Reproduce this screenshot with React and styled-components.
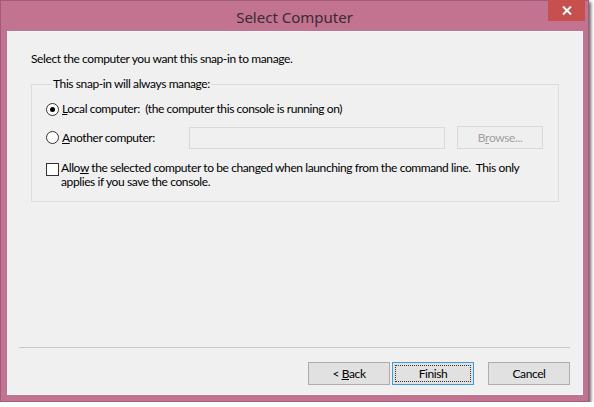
import React from "react";
import styled, { createGlobalStyle } from "styled-components";

const Global = createGlobalStyle`
  html, body { margin: 0; padding: 0; background: #ffffff; }
  body { font-family: Lato, "Noto Sans", sans-serif; }
`;

const TITLE_FONT = `"Segoe UI", "Noto Sans", "Open Sans", sans-serif`;
const UI_FONT = `Lato, "Noto Sans", sans-serif`;

const Window = styled.div`
  width: 589px;
  height: 402px;
  box-sizing: border-box;
  border: 1px solid #a35a7b;
  background: #c27390;
  display: flex;
  flex-direction: column;
  box-shadow: 2px 2px 3px rgba(0, 0, 0, 0.6);
`;

const TitleBar = styled.div`
  height: 30px;
  flex: none;
  display: grid;
  grid-template-columns: 1fr auto 1fr;
  align-items: start;
`;

const Title = styled.div`
  grid-column: 2;
  font-family: ${TITLE_FONT};
  font-size: 15px;
  line-height: 20px;
  padding-top: 6px;
  color: #3a2a31;
`;

const CloseButton = styled.div`
  grid-column: 3;
  justify-self: end;
  margin-top: -1px;
  margin-right: 3px;
  width: 37px;
  height: 21px;
  background: #c7504f;
  display: flex;
  align-items: center;
  justify-content: center;
`;

const Client = styled.div`
  flex: 1;
  margin: 0 5px 6px 6px;
  background: #f0f0f0;
  border: 1px solid #fafafa;
  display: flex;
  flex-direction: column;
  font-family: ${UI_FONT};
  font-size: 12px;
  letter-spacing: -0.4px;
  color: #000;
`;

const Intro = styled.div`
  margin: 20px 23px 0 23px;
  line-height: 14px;
`;

const Group = styled.fieldset`
  margin: 11px 23px 0 23px;
  padding: 10px 14px 12px 14px;
  border: 1px solid #dcdcdc;
  min-width: 0;
  display: flex;
  flex-direction: column;
`;

const Legend = styled.legend`
  padding: 0 1px;
  margin-left: 6px;
  line-height: 14px;
  font-size: 12px;
`;

const RadioRow = styled.div`
  display: grid;
  grid-template-columns: ${(p) => (p.$withField ? "131px 256px 86px" : "auto")};
  column-gap: 12px;
  align-items: center;
  height: ${(p) => (p.$withField ? "22px" : "16px")};
  margin-top: ${(p) => p.$top || 0}px;
`;

const Choice = styled.label`
  display: flex;
  align-items: center;
  gap: 3px;
  line-height: 14px;
  white-space: nowrap;
`;

const RadioCircle = styled.span`
  width: 13px;
  height: 13px;
  box-sizing: border-box;
  border-radius: 50%;
  border: 1px solid #333;
  background: #fff;
  display: flex;
  align-items: center;
  justify-content: center;
  flex: none;
  &::after {
    content: "";
    width: 5px;
    height: 5px;
    border-radius: 50%;
    background: ${(p) => (p.$checked ? "#000" : "transparent")};
  }
`;

const TextField = styled.div`
  height: 22px;
  box-sizing: border-box;
  border: 1px solid #d9d9d9;
  background: #f0f0f0;
`;

const Button = styled.div`
  box-sizing: border-box;
  width: ${(p) => p.$w || 82}px;
  height: 23px;
  display: flex;
  align-items: center;
  justify-content: center;
  white-space: pre;
  font-family: ${UI_FONT};
  font-size: 12px;
  color: ${(p) => (p.$disabled ? "#a0a0a0" : "#000")};
  background: ${(p) => (p.$disabled ? "#efefef" : "#e1e1e1")};
  border: 1px solid
    ${(p) => (p.$disabled ? "#d9d9d9" : p.$default ? "#3c9ae8" : "#adadad")};
  position: relative;
  ${(p) =>
    p.$default &&
    `&::after {
      content: "";
      position: absolute;
      inset: 2px;
      border: 1px dotted #333;
    }`}
`;

const CheckRow = styled.div`
  display: flex;
  align-items: flex-start;
  gap: 2px;
  margin-top: 13px;
  line-height: 14px;
`;

const CheckBox = styled.span`
  width: 13px;
  height: 13px;
  box-sizing: border-box;
  border: 1px solid #333;
  background: #fff;
  margin-top: 2px;
  flex: none;
`;

const CheckText = styled.span`
  white-space: nowrap;
`;

const Spacer = styled.div`
  flex: 1;
`;

const Separator = styled.div`
  height: 1px;
  margin: 0 12px 14px 11px;
  background: #c8c8c8;
`;

const ButtonBar = styled.div`
  display: flex;
  justify-content: flex-end;
  padding: 0 12px 9px 0;
`;

const ButtonPair = styled.div`
  display: flex;
  gap: 2px;
  margin-right: 14px;
`;

const U = styled.span`
  text-decoration: underline;
`;

export default function App() {
  return (
    <>
      <Global />
      <Window>
        <TitleBar>
          <Title>Select Computer</Title>
          <CloseButton>
            <svg width="10" height="9" viewBox="0 0 10 9">
              <path d="M1 0.5 L9 8.5 M9 0.5 L1 8.5" stroke="#fff" strokeWidth="2" />
            </svg>
          </CloseButton>
        </TitleBar>
        <Client>
          <Intro>Select the computer you want this snap-in to manage.</Intro>
          <Group>
            <Legend>This snap-in will always manage:</Legend>
            <RadioRow>
              <Choice>
                <RadioCircle $checked />
                <span>
                  <U>L</U>ocal computer:&nbsp; (the computer this console is running on)
                </span>
              </Choice>
            </RadioRow>
            <RadioRow $withField $top={9}>
              <Choice>
                <RadioCircle />
                <span>
                  <U>A</U>nother computer:
                </span>
              </Choice>
              <TextField />
              <Button $disabled $w={86}>
                B<U>r</U>owse...
              </Button>
            </RadioRow>
            <CheckRow>
              <CheckBox />
              <CheckText>
                Allo<U>w</U> the selected computer to be changed when launching from the
                command line.&nbsp; This only
                <br />
                applies if you save the console.
              </CheckText>
            </CheckRow>
          </Group>
          <Spacer />
          <Separator />
          <ButtonBar>
            <ButtonPair>
              <Button>
                {"< "}
                <U>B</U>ack
              </Button>
              <Button $default>Finish</Button>
            </ButtonPair>
            <Button>Cancel</Button>
          </ButtonBar>
        </Client>
      </Window>
    </>
  );
}
